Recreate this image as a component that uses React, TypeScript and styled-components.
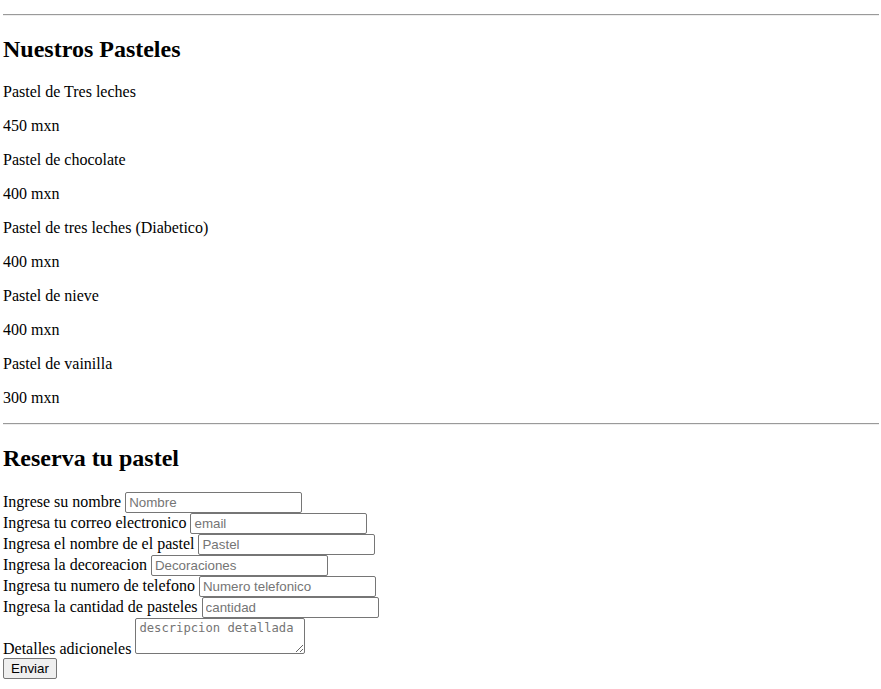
import React from "react";
import styled, { createGlobalStyle } from "styled-components";

const Global = createGlobalStyle`
  html, body { margin: 0; background: #ffffff; }
  body {
    padding: 6px 2px 0 3px;
    font-family: "Liberation Serif", "Times New Roman", serif;
    font-size: 16px;
    color: #000000;
  }
`;

const Page = styled.main`
  display: block;
`;

const Divider = styled.hr`
  margin: 8px 0;
  border: 0;
  border-top: 1px solid #9a9a9a;
  border-bottom: 1px solid #eeeeee;
  height: 0;
`;

const Title = styled.h2`
  font-size: 24px;
  font-weight: bold;
  margin: 19.92px 0;
`;

const Item = styled.p`
  margin: 16px 0;
`;

const Form = styled.form`
  display: block;
  line-height: normal;
`;

const TextInput = styled.input`
  box-sizing: border-box;
  width: 177px;
  height: 21px;
  padding: 1px 3px;
  border: 1px solid #767676;
  border-radius: 2px;
  font-family: "Liberation Sans", Arial, sans-serif;
  font-size: 13.33px;
  color: #000;
  background: #fff;
  vertical-align: baseline;
  &::placeholder { color: #757575; }
`;

const TextArea = styled.textarea`
  box-sizing: border-box;
  width: 170px;
  height: 36px;
  padding: 2px 3px;
  border: 1px solid #767676;
  border-radius: 2px;
  font-family: "DejaVu Sans Mono", "Liberation Mono", monospace;
  font-size: 12.2px;
  background: #fff;
  vertical-align: baseline;
  &::placeholder { color: #757575; }
`;

const SubmitButton = styled.button`
  box-sizing: border-box;
  height: 21px;
  width: 54px;
  padding: 1px 6px;
  border: 1px solid #767676;
  border-radius: 2px;
  background: #efefef;
  font-family: "Liberation Sans", Arial, sans-serif;
  font-size: 13.33px;
  color: #000;
`;

const cakes = [
  ["Pastel de Tres leches", "450 mxn"],
  ["Pastel de chocolate", "400 mxn"],
  ["Pastel de tres leches (Diabetico)", "400 mxn"],
  ["Pastel de nieve", "400 mxn"],
  ["Pastel de vainilla", "300 mxn"],
];

const fields: [string, string][] = [
  ["Ingrese su nombre", "Nombre"],
  ["Ingresa tu correo electronico", "email"],
  ["Ingresa el nombre de el pastel", "Pastel"],
  ["Ingresa la decoreacion", "Decoraciones"],
  ["Ingresa tu numero de telefono", "Numero telefonico"],
  ["Ingresa la cantidad de pasteles", "cantidad"],
];

export default function App() {
  return (
    <Page>
      <Global />
      <Divider />
      <Title>Nuestros Pasteles</Title>
      {cakes.map(([name, price]) => (
        <React.Fragment key={name}>
          <Item>{name}</Item>
          <Item>{price}</Item>
        </React.Fragment>
      ))}
      <Divider />
      <Title>Reserva tu pastel</Title>
      <Form onSubmit={(e) => e.preventDefault()}>
        {fields.map(([label, ph]) => (
          <React.Fragment key={label}>
            {label} <TextInput type="text" placeholder={ph} />
            <br />
          </React.Fragment>
        ))}
        Detalles adicioneles <TextArea placeholder="descripcion detallada" />
        <br />
        <SubmitButton type="submit">Enviar</SubmitButton>
      </Form>
    </Page>
  );
}
